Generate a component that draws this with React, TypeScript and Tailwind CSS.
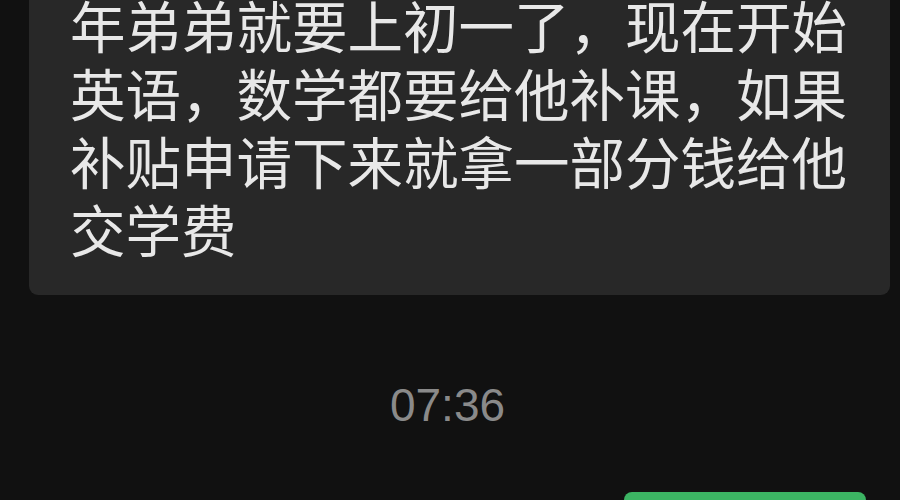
export default function App() {
  const lines = [
    "年弟弟就要上初一了，现在开始",
    "英语，数学都要给他补课，如果",
    "补贴申请下来就拿一部分钱给他",
    "交学费",
  ];

  return (
    <div className="w-[900px] h-[500px] overflow-hidden bg-[#111111] flex flex-col">
      {/* received message, top cut off */}
      <div className="ml-[29px] w-[861px] -mt-[10px] rounded-b-[9px] bg-[#282828] pl-[41px] pb-[33px]">
        {lines.map((line, i) => (
          <div
            key={i}
            className="text-[55.5px] leading-[68px] text-[#e8e8e8] whitespace-nowrap"
            style={{ fontFamily: '"Noto Sans CJK SC", sans-serif' }}
          >
            {line}
          </div>
        ))}
      </div>

      {/* timestamp */}
      <div className="mt-[82px] flex justify-center pr-[5px]">
        <span
          className="text-[46px] leading-[56px] text-[#8a8a8a]"
          style={{ fontFamily: '"Liberation Sans", Arial, sans-serif' }}
        >
          07:36
        </span>
      </div>

      {/* sent message, cut off at bottom */}
      <div className="mt-[59px] self-end mr-[34px] w-[242px] h-[40px] shrink-0 rounded-t-[8px] bg-[#3cb463]" />
    </div>
  );
}
